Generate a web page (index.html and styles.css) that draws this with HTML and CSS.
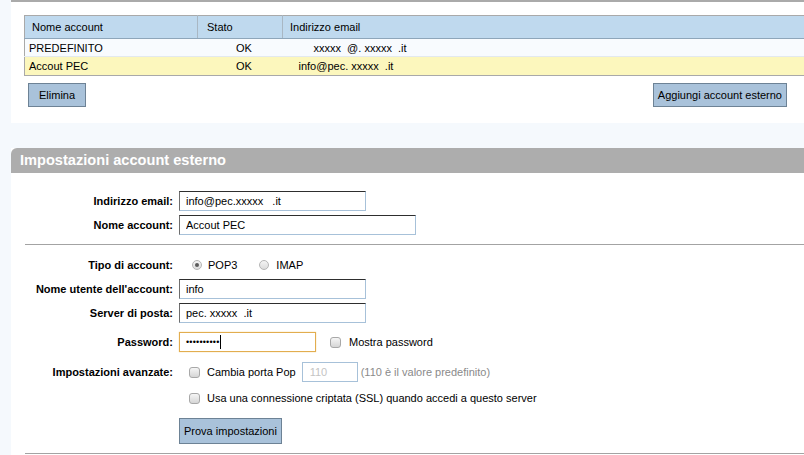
FILE: index.html
```html
<!DOCTYPE html>
<html lang="it">
<head>
<meta charset="utf-8">
<title>Account esterni</title>
<link rel="stylesheet" href="styles.css">
</head>
<body>
<div class="page">
  <section class="accounts">
    <table class="acc-table">
      <thead>
        <tr>
          <th class="c-name">Nome account</th>
          <th class="c-state">Stato</th>
          <th class="c-mail">Indirizzo email</th>
        </tr>
      </thead>
      <tbody>
        <tr class="r-default">
          <td class="c-name">PREDEFINITO</td>
          <td class="c-state">OK</td>
          <td class="c-mail"><span class="mail-indent">xxxxx&nbsp; @. xxxxx&nbsp; .it</span></td>
        </tr>
        <tr class="r-selected">
          <td class="c-name">Accout PEC</td>
          <td class="c-state">OK</td>
          <td class="c-mail">info@pec. xxxxx&nbsp; .it</td>
        </tr>
      </tbody>
    </table>
    <div class="acc-actions">
      <button class="btn btn-del" type="button">Elimina</button>
      <button class="btn btn-add" type="button">Aggiungi account esterno</button>
    </div>
  </section>

  <section class="settings">
    <h2 class="bar">Impostazioni account esterno</h2>
    <div class="form">
      <div class="row r-first">
        <label class="lbl">Indirizzo email:</label>
        <input class="inp w186" type="text" value="info@pec.xxxxx&nbsp;&nbsp; .it">
      </div>
      <div class="row g4">
        <label class="lbl">Nome account:</label>
        <input class="inp w236" type="text" value="Accout PEC">
      </div>
      <div class="rule rule-mid"></div>
      <div class="row g10">
        <span class="lbl">Tipo di account:</span>
        <span class="radio on first-opt"></span><span class="opt">POP3</span>
        <span class="radio second-opt"></span><span class="opt">IMAP</span>
      </div>
      <div class="row g4">
        <label class="lbl">Nome utente dell'account:</label>
        <input class="inp w186" type="text" value="info">
      </div>
      <div class="row g4">
        <label class="lbl">Server di posta:</label>
        <input class="inp w186" type="text" value="pec. xxxxx&nbsp; .it">
      </div>
      <div class="row g9">
        <span class="lbl">Password:</span>
        <div class="inp pwd w136"><span class="dots">••••••••••</span><span class="caret"></span></div>
        <span class="check mostra"></span><span class="opt">Mostra password</span>
      </div>
      <div class="row g10">
        <span class="lbl">Impostazioni avanzate:</span>
        <span class="check indent"></span><span class="opt">Cambia porta Pop</span>
        <input class="inp port" type="text" value="110" disabled>
        <span class="hint">(110 è il valore predefinito)</span>
      </div>
      <div class="row g6">
        <span class="lbl"></span>
        <span class="check indent"></span><span class="opt">Usa una connessione criptata (SSL) quando accedi a questo server</span>
      </div>
      <div class="row g10 row-btn">
        <span class="lbl"></span>
        <button class="btn btn-tall" type="button">Prova impostazioni</button>
      </div>
      <div class="rule rule-bottom"></div>
    </div>
  </section>
</div>
</body>
</html>
```
FILE: styles.css
```css
* { box-sizing: border-box; }
html, body { margin: 0; padding: 0; }
body {
  background: #f5f9fd;
  font-family: "Liberation Sans", Arial, sans-serif;
  font-size: 11px;
  color: #000;
  overflow: hidden;
}
.page {
  padding-left: 11px;
  width: 804px;
}
.accounts {
  background: #fff;
  border-top: 2px solid #aaaaaa;
  padding: 13px 0 16px 13px;
}
.acc-table {
  border-collapse: collapse;
  width: 790px;
  border: 1px solid #a9a9a9;
  border-right: none;
}
.acc-table th {
  background: #bfd9ee;
  font-weight: normal;
  text-align: left;
  height: 23px;
  padding: 0 0 0 7px;
  border-bottom: 1px solid #8ea6ba;
  border-left: 1px solid #a9b7c3;
}
.acc-table th:first-child { border-left: none; }
.acc-table th.c-state { padding-left: 9px; }
.c-name { width: 173px; }
.c-state { width: 85px; }
.acc-table td {
  height: 18px;
  padding: 0 0 0 4px;
  border-bottom: 1px solid #e3e9ee;
}
.acc-table td.c-state { text-align: center; padding-left: 8px; }
.acc-table td.c-mail { padding-left: 16px; }
.mail-indent { padding-left: 15px; }
.r-default td { background: #f8fbfe; }
.r-selected td { background: #fcf7bd; border-bottom: none; height: 19px; }
.acc-actions {
  display: flex;
  justify-content: space-between;
  margin-top: 7px;
  padding: 0 17px 0 4px;
}
.btn {
  font-family: "Liberation Sans", Arial, sans-serif;
  font-size: 11px;
  color: #000;
  background: #a9c2da;
  border: 1px solid #6d8295;
  height: 24px;
  padding: 0 5px;
  border-radius: 0;
}
.btn-del { padding: 0 10px; }
.btn-add { padding: 0 4px; }
.btn-tall { height: 26px; padding: 0 4px; }

.settings {
  margin-top: 25px;
  background: #fff;
}
.bar {
  margin: 0;
  height: 25px;
  line-height: 25px;
  background: #adadad;
  color: #fff;
  font-size: 14.6px;
  font-weight: bold;
  padding-left: 9px;
  border-top-left-radius: 6px;
}
.form {
  padding-top: 18px;
  padding-bottom: 10px;
}
.row {
  display: flex;
  align-items: center;
  height: 20px;
}
.r-first { margin-top: 0; }
.g4 { margin-top: 4px; }
.g6 { margin-top: 6px; }
.g9 { margin-top: 9px; }
.g10 { margin-top: 10px; }
.row-btn { height: 26px; }
.lbl {
  width: 162px;
  margin-right: 6px;
  text-align: right;
  font-weight: bold;
  flex: none;
}
.inp {
  font-family: "Liberation Sans", Arial, sans-serif;
  font-size: 11px;
  color: #000;
  height: 20px;
  padding: 0 0 0 6px;
  background: #fff;
  border: 1px solid #a7c1d9;
  border-top-color: #2e2e2e;
  border-left-color: #6e6e6e;
  outline: none;
}
.w186 { width: 187px; }
.w236 { width: 237px; }
.w136 { width: 137px; }
.pwd {
  display: flex;
  align-items: center;
  border: 1px solid #e2ad4f;
  box-shadow: 0 0 1px #f0c878;
}
.dots {
  font-size: 9px;
  letter-spacing: 0.2px;
  line-height: 1;
}
.caret {
  display: inline-block;
  width: 1px;
  height: 14px;
  background: #000;
  margin-left: 0;
}
.port {
  width: 56px;
  margin-left: 6px;
  border-color: #a7c1d9;
  color: #c4c4c4;
  padding-left: 7px;
}
.hint {
  color: #8a8a8a;
  margin-left: 3px;
}
.radio {
  display: inline-block;
  width: 10px;
  height: 10px;
  border-radius: 50%;
  border: 1px solid #b5b5b5;
  background: linear-gradient(#f4f4f4, #dcdcdc);
  position: relative;
  flex: none;
}
.radio.on::after {
  content: "";
  position: absolute;
  left: 2px;
  top: 2px;
  width: 4px;
  height: 4px;
  border-radius: 50%;
  background: #5a5a5a;
}
.first-opt { margin-left: 13px; margin-right: 6px; }
.second-opt { margin-left: 22px; margin-right: 7px; }
.opt { white-space: nowrap; }
.check {
  display: inline-block;
  width: 11px;
  height: 11px;
  border-radius: 3px;
  border: 1px solid #a8a8a8;
  background: linear-gradient(#f5f5f5, #d6d6d6);
  flex: none;
}
.indent { margin-left: 10px; margin-right: 7px; }
.mostra { margin-left: 14px; margin-right: 8px; }
.rule {
  margin-left: 14px;
  border-top: 1px solid #a3a3a3;
}
.rule-mid { margin-top: 9px; margin-bottom: 0; }
.rule-bottom { margin-top: 9px; }
```
